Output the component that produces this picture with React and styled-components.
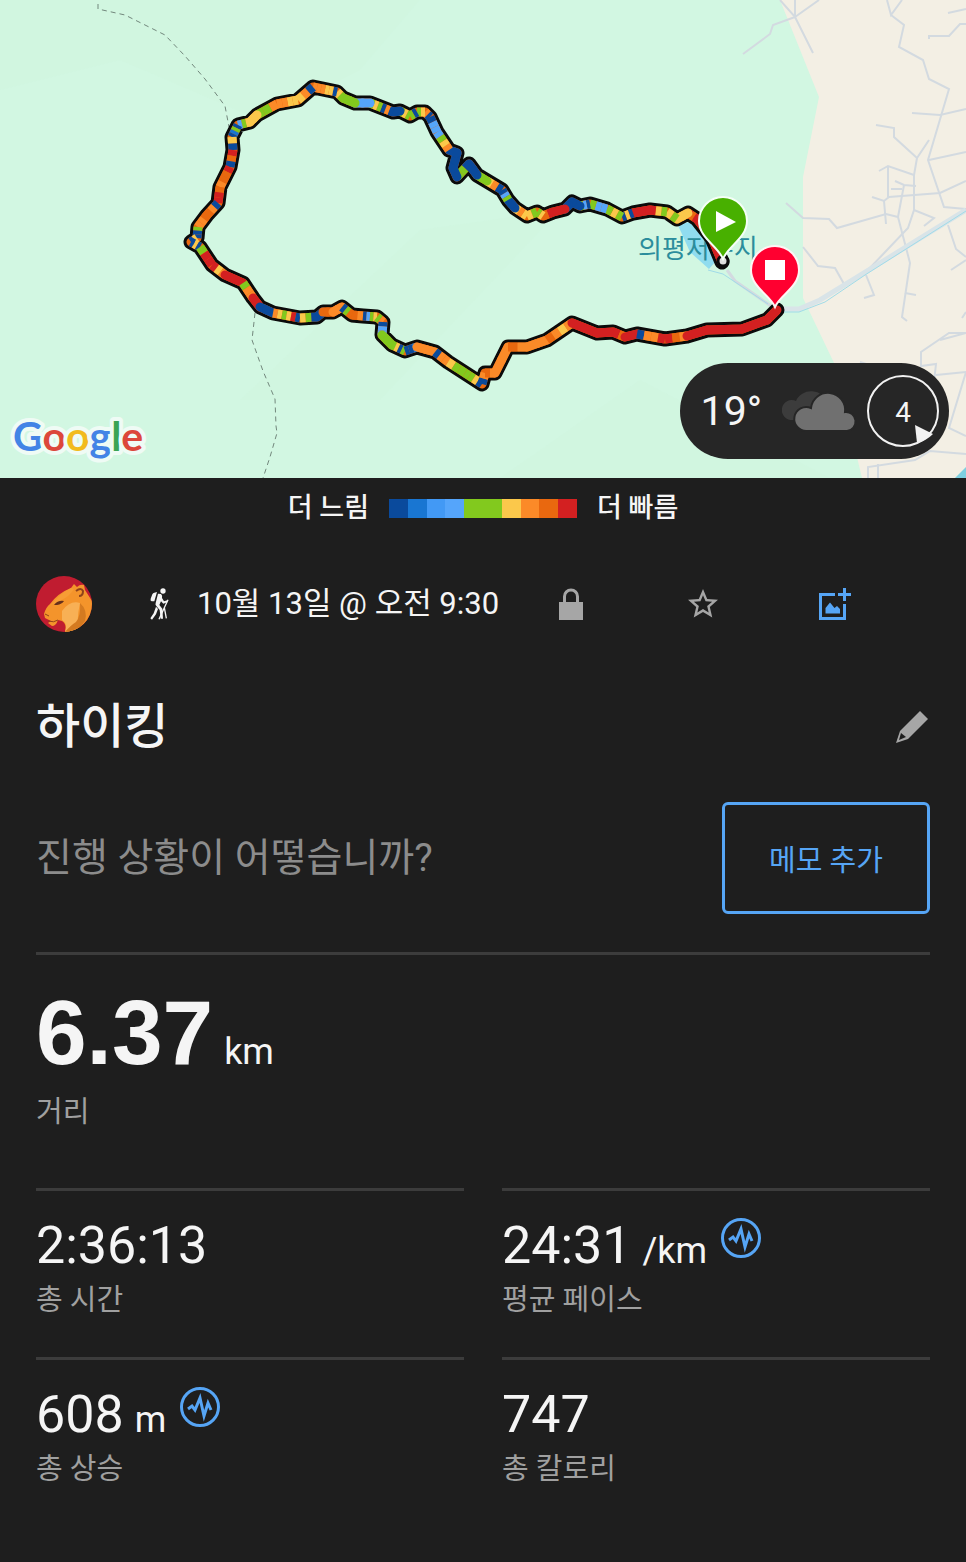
import styled, { createGlobalStyle } from "styled-components"
import { MdStarBorder } from "react-icons/md"

const paceColors = {
  n: "#0a4a9c",
  b: "#1976d2",
  s: "#4299f5",
  l: "#55a5fb",
  g: "#82c91e",
  y: "#fbc84b",
  o: "#fb8a28",
  d: "#e9680f",
  r: "#d32021",
}

const legendArr = ["n", "b", "s", "l", "g", "g", "y", "o", "d", "r"]

// x, y, and the pace colours of the stretch that leads there
const routeArr = [
  [722, 262], [712, 238, "r"], [697, 219, "r"], [688, 213, "rdr"], [677, 219, "yy"], [667, 212, "gy"],
  [650, 210, "gyr"], [633, 213, "rr"], [622, 217, "nyn"], [607, 209, "gyg"], [590, 204, "llg"],
  [580, 206, "nlg"], [572, 202, "nn"], [565, 209, "nn"], [553, 212, "rr"], [543, 216, "rd"],
  [537, 212, "yg"], [527, 216, "gy"], [515, 208, "yoy"], [508, 200, "nn"], [502, 190, "gln"],
  [487, 181, "noy"], [477, 175, "gg"], [469, 164, "nn"], [457, 177, "ngg"], [453, 168, "n"],
  [457, 153, "nn"], [449, 150, "n"], [437, 132, "oygl"], [430, 117, "lln"], [425, 112, "no"],
  [417, 112, "yg"], [410, 116, "ng"], [400, 111, "gyg"], [393, 112, "nn"], [370, 103, "nongyg"],
  [355, 103, "ll"], [343, 98, "gg"], [337, 92, "gy"], [313, 87, "nyyooo"], [298, 100, "noy"],
  [277, 104, "yyoo"], [257, 115, "ogg"], [250, 122, "yy"], [238, 125, "ygl"], [232, 137, "ngbn"],
  [233, 150, "yn"], [230, 167, "rdn"], [220, 187, "rddo"], [218, 203, "drr"], [207, 215, "nod"],
  [198, 227, "doo"], [197, 238, "gnn"], [191, 242, "yn"], [200, 247, "nyn"], [212, 265, "grr"],
  [225, 275, "ryo"], [243, 283, "rr"], [253, 298, "goo"], [260, 307, "rr"], [273, 313, "nn"],
  [300, 318, "oygyrn"], [317, 317, "ygn"], [323, 312, "nn"], [333, 312, "dd"], [342, 307, "oo"],
  [352, 315, "ngd"], [363, 316, "do"], [377, 317, "nlgy"], [383, 322, "go"], [382, 335, "nll"],
  [392, 345, "gg"], [405, 351, "gyng"], [417, 347, "nnb"], [435, 352, "oo"], [448, 362, "noo"],
  [465, 373, "ygg"], [482, 384, "ggyn"], [485, 373, "no"], [495, 373, "do"], [508, 347, "oo"],
  [527, 347, "do"], [547, 340, "oo"], [572, 323, "doyo"], [597, 333, "rr"], [613, 332, "r"],
  [625, 337, "rd"], [637, 334, "rr"], [665, 339, "noor"], [687, 336, "rdo"], [707, 330, "r"],
  [742, 329, "r"], [767, 320, "r"], [777, 310, "r"],
]

const routeLine = routeArr.map(([x, y]) => `${x},${y}`).join(" ")

const roadArr = [
  "M780 0L795 17L819 0M795 17V0M795 17L813 53M795 17L773 25L770 34L743 54",
  "M887 0L891 15L902 0M891 15L904 25L899 47L923 60L929 79L949 89L928 160L944 207L966 209",
  "M966 9L948 13M966 24H960L949 36H929V39M912 113L940 115L966 109M929 160L966 152",
  "M876 125L894 128V137L917 158L929 140M917 158L914 175V210L908 228L868 270",
  "M879 171L888 166L914 175M888 166V197M895 181L904 185L916 186M904 185L898 217L910 263L902 317L907 321",
  "M872 197L884 201L889 197L940 193L966 181M884 201L886 224M891 189H902M914 210L934 218L924 226",
  "M786 203L803 218L829 219L837 228L886 214L898 217M803 247L818 266L835 268L844 284",
  "M866 275L874 295L864 298M905 293L916 295M948 225L956 249L966 257M951 270L966 260",
  "M940 340L966 333H949L921 352V366L936 364L934 382M936 375L966 372M860 362L885 370",
  "M966 372L949 428L966 436M868 478V467L915 460L930 451L966 454M878 478V464M966 312L962 318",
]

const statsArr = [
  { value: "2:36:13", label: "총 시간" },
  { value: "24:31", unit: "/km", label: "평균 페이스", chart: true },
  { value: "608", unit: "m", label: "총 상승", chart: true },
  { value: "747", label: "총 칼로리" },
]

const Route = () => (
  <g fill="none" strokeLinejoin="round">
    <polyline points={routeLine} stroke="#0b0b0b" strokeWidth="15" strokeLinecap="round" />
    <polyline points={routeLine} stroke="#e9680f" strokeWidth="9" />
    {
      routeArr.slice(1).flatMap(([x, y, colors], idx) => {
        const [px, py] = routeArr[idx]
        const n = colors.length
        // stretches of a single colour get round ends so that the bends stay closed
        const cap = new Set(colors).size === 1 ? "round" : "butt"
        return colors.split("").map((c, i) => (
          <line
            key={`${idx}-${i}`}
            x1={px + ((x - px) * i) / n}
            y1={py + ((y - py) * i) / n}
            x2={px + ((x - px) * (i + 1)) / n}
            y2={py + ((y - py) * (i + 1)) / n}
            stroke={paceColors[c]}
            strokeWidth="9"
            strokeLinecap={cap}
          />
        ))
      })
    }
  </g>
)

const MapDrawing = () => (
  <MapSvg viewBox="0 0 966 478" role="img" aria-label="하이킹 경로">
    <rect width="966" height="478" fill="#d2f7e2" />
    <path d="M0 90L120 60L260 120L360 70L420 0H0ZM500 478L640 380L830 478ZM240 400L420 230L560 210L380 400Z" fill="#cff5df" opacity=".4" />
    <path d="M780 0L819 97L803 177V298L835 365L862 478H966V0Z" fill="#f3efe4" />
    <g fill="none" stroke="#d3dae0" strokeWidth="2">
      {roadArr.map((d, idx) => <path key={idx} d={d} />)}
      <path d="M727 270L735 281L771 306L783 308" strokeWidth="3" />
      <path d="M783 309H799L820 300L966 210" strokeWidth="5" stroke="#d9e4e8" />
    </g>
    <path d="M708 270L723 274L768 304M783 312H799L825 302L865 275L966 211" fill="none" stroke="#a0dbe8" strokeWidth="1" />
    <path d="M955 478L966 467V478Z" fill="#7fcfe0" />
    <path d="M677 223L699 222L715 262L709 269L690 252Z" fill="#90dcef" />
    <g fill="none" stroke="#72877c" strokeWidth="1" strokeDasharray="5 4">
      <path d="M98 4V9L125 15L165 35L185 56L205 79L225 106L229 127" />
      <path d="M255 313L252 340L263 371L275 399L276 426L277 433L270 457L263 478" />
    </g>
    <PlaceText x="638" y="258">의평저수지</PlaceText>
    <Route />
    <circle cx="723" cy="261" r="5" fill="#ddd" stroke="#0b0b0b" strokeWidth="3" />
    <path d="M723 259C718 246 699 238 699 221A24 24 0 0 1 747 221C747 238 728 246 723 259Z" fill="#48b000" stroke="#f4fff6" strokeWidth="2" />
    <path d="M716 211L736 222L716 232Z" fill="#fff" />
    <path d="M775 307C770 295 751 287 751 270A24 24 0 0 1 799 270C799 287 780 295 775 307Z" fill="#ff0030" stroke="#fff4f4" strokeWidth="2" />
    <rect x="765" y="260" width="20" height="20" fill="#fff" />
    <GoogleText x="13" y="451">
      <tspan fill="#4384e6">G</tspan>
      <tspan fill="#dc473b">o</tspan>
      <tspan fill="#f2bb1d">o</tspan>
      <tspan fill="#4384e6">g</tspan>
      <tspan fill="#3ba455">l</tspan>
      <tspan fill="#dc473b">e</tspan>
    </GoogleText>
  </MapSvg>
)

const CloudIcon = () => (
  <svg width="76" height="44" viewBox="0 0 76 44" aria-hidden="true">
    <path d="M11 31A10 10 0 1 1 14 12A16 14 0 0 1 45 14V31Z" fill="#3c3c3c" />
    <path d="M25 42A12 12 0 1 1 29 19A17 17 0 0 1 63 23A9 9 0 0 1 65 42Z" fill="#707070" stroke="#262626" strokeWidth="2" />
  </svg>
)

const WindIcon = () => (
  <svg width="74" height="74" viewBox="0 0 74 74" role="img" aria-label="바람 4">
    <circle cx="37" cy="37" r="35" fill="none" stroke="#f2f2f2" strokeWidth="2" />
    <path d="M49 51L67 60Q60 67 51 69Z" fill="#f2f2f2" />
    <WindText x="37" y="48">4</WindText>
  </svg>
)

const AvatarIcon = () => (
  <svg width="56" height="56" viewBox="0 0 56 56" role="img" aria-label="프로필">
    <clipPath id="avatarClip"><circle cx="28" cy="28" r="28" /></clipPath>
    <g clipPath="url(#avatarClip)">
      <rect width="56" height="56" fill="#c01c30" />
      <path d="M8 38Q10 31 14 28Q22 17 35 12L38 8L41 11Q44 8 48 9L49 14L58 28V56H29Q31 48 26 45L22 44Q20 50 16 50L12 47L15 45L9 42Z" fill="#f4942b" />
      <path d="M35 12Q23 18 15 29L24 25Q34 20 38 13Z" fill="#f79d35" />
      <path d="M26 35Q34 24 44 27Q40 45 43 56H29Q32 47 26 44Z" fill="#f8b055" />
      <path d="M44 27Q52 34 49 45L40 56H29Q35 49 40 46Q45 40 44 27Z" fill="#d47a20" />
      <path d="M40 15Q45 11 47 15Q47 20 43 20" fill="none" stroke="#8f431b" strokeWidth="2" />
      <path d="M18 29Q22 24 28 25Q26 28 21 29Z" fill="#66301c" />
      <path d="M9 38L13 40M12 45Q18 47 22 44" fill="none" stroke="#8f431b" strokeWidth="1" />
    </g>
  </svg>
)

const HikerIcon = () => (
  <svg width="20" height="34" viewBox="0 0 60 102" aria-hidden="true">
    <circle cx="42" cy="12" r="8" fill="#f5f5f5" />
    <path d="M16 17L24 15L16 43L8 43Q3 41 5 35L10 22Q12 17 16 17Z" fill="#f5f5f5" />
    <path d="M27 20L36 21Q41 25 39 33L45 43L55 40L56 45L43 50L36 43L31 54L40 65L42 95H35L32 69L22 57Q18 54 20 48Z" fill="#f5f5f5" />
    <path d="M21 59L27 66L21 82L9 98L4 94L14 79Z" fill="#f5f5f5" />
    <path d="M57 38L30 97M46 62L52 94" stroke="#f5f5f5" strokeWidth="4" fill="none" />
  </svg>
)

const LockIcon = () => (
  <svg width="24" height="32" viewBox="0 0 24 32" aria-hidden="true">
    <path d="M5.500 15V8.500a6.500 6.500 0 0 1 13 0V15" fill="none" stroke="#a6a6a6" strokeWidth="3" />
    <rect y="14" width="24" height="18" fill="#a6a6a6" />
  </svg>
)

const AddPhotoIcon = () => (
  <svg width="32" height="32" viewBox="0 0 32 32" aria-hidden="true">
    <path d="M16 6.500H1.500V30.500H25.500V16M25.500 0V13M19 6.500H32" fill="none" stroke="#56a5f5" strokeWidth="3" />
    <path d="M6.500 25.500V20L11 14.500L15.500 20L18 18L21 21V25.500Z" fill="#56a5f5" />
  </svg>
)

const PencilIcon = () => (
  <svg width="32" height="32" viewBox="0 0 32 32" aria-hidden="true">
    <path fillRule="evenodd" d="M24 0L32 8L12 28L0 32L4 20ZM5 22L3 29L10 26Z" fill="#a6a6a6" />
  </svg>
)

const PulseIcon = () => (
  <svg width="40" height="40" viewBox="0 0 40 40" aria-hidden="true">
    <circle cx="20" cy="20" r="18.500" fill="none" stroke="#56a5f5" strokeWidth="3" />
    <path d="M8 22L12 19L15 23L20 11L24 29L28 16L31 23" fill="none" stroke="#56a5f5" strokeWidth="3" />
  </svg>
)

const App = () => {
  return (
    <>
    <GlobalStyle />
    <MapArea>
      <MapDrawing />
      <Weather>
        <Temperature>19°</Temperature>
        <CloudIcon />
        <WindIcon />
      </Weather>
    </MapArea>
    <Legend>
      <span>더 느림</span>
      <LegendBar>
        {legendArr.map((val, idx) => <LegendCell key={idx} $color={paceColors[val]} />)}
      </LegendBar>
      <span>더 빠름</span>
    </Legend>
    <Content>
      <InfoRow>
        <AvatarIcon />
        <HikerWrap><HikerIcon /></HikerWrap>
        <DateText>10월 13일 @ 오전 9:30</DateText>
        <Actions>
          <ActionButton aria-label="비공개"><LockIcon /></ActionButton>
          <ActionButton aria-label="즐겨찾기"><MdStarBorder size={36} /></ActionButton>
          <ActionButton aria-label="사진 추가"><AddPhotoIcon /></ActionButton>
        </Actions>
      </InfoRow>
      <TitleRow>
        <Title>하이킹</Title>
        <EditButton aria-label="제목 편집"><PencilIcon /></EditButton>
      </TitleRow>
      <MemoRow>
        <MemoText>진행 상황이 어떻습니까?</MemoText>
        <MemoButton>메모 추가</MemoButton>
      </MemoRow>
      <Distance>
        <DistanceValue>6.37<Unit>km</Unit></DistanceValue>
        <Label>거리</Label>
      </Distance>
      <Stats>
        {
          statsArr.map((val) => (
            <Stat key={val.label}>
              <StatValue>
                <span>{val.value}{val.unit && <Unit>{val.unit}</Unit>}</span>
                {val.chart && <ChartButton aria-label={`${val.label} 차트`}><PulseIcon /></ChartButton>}
              </StatValue>
              <Label>{val.label}</Label>
            </Stat>
          ))
        }
      </Stats>
    </Content>
    </>
  )
}

export default App

const GlobalStyle = createGlobalStyle`
* {
  box-sizing: border-box;
}
body {
  margin: 0;
  background: #1e1e1e;
  color: #f5f5f5;
  font-family: Roboto, "Noto Sans CJK KR", sans-serif;
}
button {
  padding: 0;
  border: 0;
  background: none;
  color: #a6a6a6;
  font-family: inherit;
  cursor: pointer;
}
svg {
  display: block;
  flex-shrink: 0;
}
`

const MapArea = styled.div`
position: relative;
`

const MapSvg = styled.svg`
width: 100%;
height: auto;
`

const PlaceText = styled.text`
font-size: 26px;
fill: #2b8d9c;
`

const GoogleText = styled.text`
font-family: Lato, sans-serif;
font-size: 41px;
font-weight: 700;
stroke: #effbf5;
stroke-width: 8px;
stroke-linejoin: round;
paint-order: stroke;
`

const WindText = styled.text`
font-size: 28px;
fill: #f5f5f5;
text-anchor: middle;
`

const Weather = styled.div`
position: absolute;
right: 17px;
bottom: 19px;
display: flex;
align-items: center;
gap: 8px;
height: 96px;
padding: 0 9px 0 21px;
border-radius: 48px;
background: #262626;
`

const Temperature = styled.span`
font-size: 41px;
line-height: 48px;
margin-right: 12px;
`

const Legend = styled.div`
display: flex;
justify-content: center;
align-items: center;
gap: 20px;
height: 60px;
font-size: 27px;
font-weight: 500;
line-height: 40px;
`

const LegendBar = styled.div`
display: flex;
width: 188px;
height: 19px;
`

const LegendCell = styled.div`
flex: 1;
background: ${({ $color }) => $color};
`

const Content = styled.main`
padding: 38px 36px 32px;
`

const InfoRow = styled.div`
display: flex;
align-items: center;
height: 56px;
`

const HikerWrap = styled.span`
margin: 0 28px 0 57px;
`

const DateText = styled.span`
flex: 1;
font-size: 31px;
line-height: 40px;
white-space: nowrap;
`

const Actions = styled.div`
display: flex;
margin-right: 29px;
`

const ActionButton = styled.button`
display: flex;
justify-content: center;
align-items: center;
width: 132px;
height: 56px;
`

const TitleRow = styled.div`
display: flex;
justify-content: space-between;
align-items: center;
margin-top: 65px;
`

const Title = styled.h1`
margin: 0;
font-size: 48px;
font-weight: 500;
line-height: 60px;
`

const EditButton = styled.button`
display: flex;
justify-content: center;
width: 36px;
`

const MemoRow = styled.div`
display: flex;
justify-content: space-between;
align-items: center;
margin-top: 45px;
padding-bottom: 38px;
`

const MemoText = styled.p`
margin: 0;
color: #8c8c8c;
font-size: 39px;
line-height: 48px;
`

const MemoButton = styled.button`
width: 208px;
height: 112px;
border: 3px solid #56a5f5;
border-radius: 6px;
color: #56a5f5;
font-size: 29px;
`

const Distance = styled.section`
padding: 30px 0 56px;
border-top: 3px solid #3c3c3c;
`

const DistanceValue = styled.div`
margin-bottom: 11px;
font-family: "Liberation Sans", Arial, sans-serif;
font-size: 91px;
font-weight: 700;
line-height: 96px;
`

const Unit = styled.span`
margin-left: 11px;
font-family: Roboto, sans-serif;
font-size: 36px;
font-weight: 400;
line-height: 40px;
`

const Label = styled.div`
color: #a0a0a0;
font-size: 29px;
line-height: 40px;
`

const Stats = styled.section`
display: grid;
grid-template-columns: repeat(2, 1fr);
column-gap: 38px;
`

const Stat = styled.div`
padding: 25px 0 37px;
border-top: 3px solid #3c3c3c;
`

const StatValue = styled.div`
display: flex;
gap: 14px;
margin-bottom: 4px;
font-size: 52px;
line-height: 60px;
`

const ChartButton = styled.button`
display: flex;
align-items: center;
height: 44px;
`
